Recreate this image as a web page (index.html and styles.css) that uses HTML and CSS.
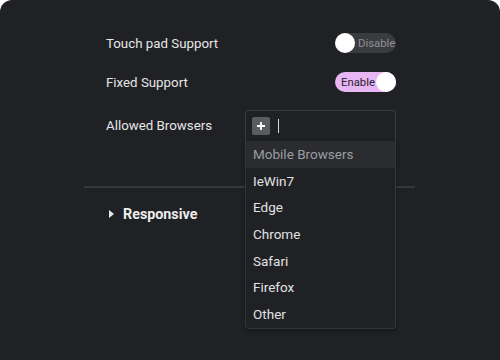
FILE: index.html
```html
<!DOCTYPE html>
<html>
<head>
<meta charset="utf-8">
<link rel="stylesheet" href="styles.css">
</head>
<body>
<div class="panel">
  <div class="settings">
    <div class="row r1">
      <span class="label">Touch pad Support</span>
      <span class="toggle off"><span class="knob"></span><span class="ttext">Disable</span></span>
    </div>
    <div class="row r2">
      <span class="label">Fixed Support</span>
      <span class="toggle on"><span class="ttext">Enable</span><span class="knob"></span></span>
    </div>
    <div class="row r3">
      <span class="label">Allowed Browsers</span>
      <div class="select">
        <div class="input">
          <span class="plus">
            <svg width="10" height="10" viewBox="0 0 10 10"><path d="M5 1v8M1 5h8" stroke="#fff" stroke-width="1.8"/></svg>
          </span>
          <span class="caret"></span>
        </div>
        <ul class="menu">
          <li class="active">Mobile Browsers</li>
          <li>IeWin7</li>
          <li>Edge</li>
          <li>Chrome</li>
          <li>Safari</li>
          <li>Firefox</li>
          <li>Other</li>
        </ul>
      </div>
    </div>
  </div>
  <div class="sep"></div>
  <div class="section">
    <svg class="tri" width="5" height="8" viewBox="0 0 5 8"><path d="M0 0L5 4L0 8Z" fill="#e8e8e8"/></svg>
    <span class="stitle">Responsive</span>
  </div>
</div>
</body>
</html>
```
FILE: styles.css
```css
html, body {
  margin: 0;
  padding: 0;
  background: #ffffff;
}
.panel {
  width: 500px;
  height: 360px;
  background: #202124;
  border-radius: 12px 12px 0 0;
  overflow: hidden;
  font-family: Roboto, "Noto Sans", sans-serif;
  color: #e6e6e6;
  font-size: 13.3px;
  box-sizing: border-box;
  padding-top: 33px;
}
.settings {
  margin-left: 106px;
  width: 290px;
  display: flex;
  flex-direction: column;
}
.row {
  display: flex;
  align-items: center;
  justify-content: space-between;
}
.r2 { margin-top: 19px; }
.r3 { margin-top: 18px; align-items: flex-start; }
.r3 .label { margin-top: 8px; }
.label {
  color: #e6e6e6;
}
.toggle {
  width: 61px;
  height: 20px;
  border-radius: 10px;
  display: flex;
  align-items: center;
  box-sizing: border-box;
  font-size: 11.3px;
}
.toggle .knob {
  width: 20px;
  height: 20px;
  border-radius: 50%;
  background: #ffffff;
  flex: none;
}
.toggle.off {
  background: #3a3b3f;
  color: #909196;
}
.toggle.off .ttext { margin-left: 3px; }
.toggle.on {
  background: #e7b6f3;
  color: #2a2230;
  padding-left: 6px;
  justify-content: space-between;
}
.select {
  position: relative;
  width: 151px;
}
.input {
  height: 31px;
  border: 1px solid #3a3b3f;
  border-bottom: none;
  border-radius: 4px 4px 0 0;
  box-sizing: border-box;
  display: flex;
  align-items: center;
  padding-left: 6px;
}
.plus {
  width: 18px;
  height: 18px;
  background: #5b5c60;
  border-radius: 2px;
  display: flex;
  align-items: center;
  justify-content: center;
}
.caret {
  width: 1px;
  height: 14px;
  background: #d8d8d8;
  margin-left: 8px;
}
.menu {
  position: absolute;
  left: 0;
  top: 31px;
  width: 151px;
  margin: 0;
  padding: 0;
  list-style: none;
  background: #202125;
  border: 1px solid #35363a;
  border-top: none;
  border-radius: 0 0 4px 4px;
  box-sizing: border-box;
  box-shadow: 0 2px 4px rgba(0,0,0,0.35);
  z-index: 2;
}
.menu li {
  height: 26.7px;
  line-height: 26.7px;
  padding-left: 7px;
  font-size: 13.5px;
  color: #e2e2e2;
}
.menu li.active {
  background: #2b2c30;
  color: #9c9da1;
}
.sep {
  margin-left: 84px;
  width: 331px;
  height: 2px;
  background: #36373b;
  margin-top: 45px;
}
.section {
  display: flex;
  align-items: center;
  margin-left: 109px;
  margin-top: 18px;
}
.tri { margin-right: 9px; }
.stitle {
  font-weight: bold;
  font-size: 14.3px;
  color: #ececec;
}
```
